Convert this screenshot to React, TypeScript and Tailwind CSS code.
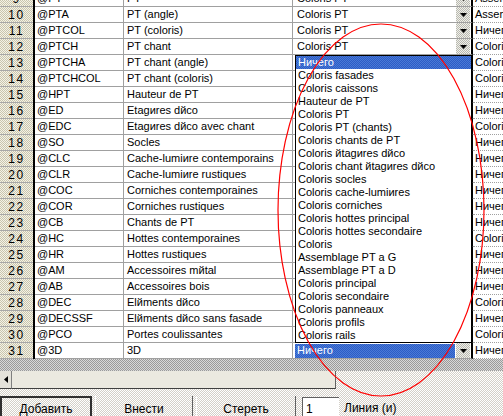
import React from 'react';

type Row = [number, string, string, string, string];

const rows: Row[] = [
  [9, '@PT', 'PT', 'Coloris PT', 'Assemblage PT a G'],
  [10, '@PTA', 'PT (angle)', 'Coloris PT', 'Assemblage PT a D'],
  [11, '@PTCOL', 'PT (coloris)', 'Coloris PT', 'Ничего'],
  [12, '@PTCH', 'PT chant', 'Coloris PT', 'Coloris PT'],
  [13, '@PTCHA', 'PT chant (angle)', '', 'Coloris PT (chants)'],
  [14, '@PTCHCOL', 'PT chant (coloris)', '', 'Coloris chants de PT'],
  [15, '@HPT', 'Hauteur de PT', '', 'Ничего'],
  [16, '@ED', 'Etagиres dйco', '', 'Ничего'],
  [17, '@EDC', 'Etagиres dйco avec chant', '', 'Coloris'],
  [18, '@SO', 'Socles', '', 'Ничего'],
  [19, '@CLC', 'Cache-lumiиre contemporains', '', 'Ничего'],
  [20, '@CLR', 'Cache-lumiиre rustiques', '', 'Ничего'],
  [21, '@COC', 'Corniches contemporaines', '', 'Ничего'],
  [22, '@COR', 'Corniches rustiques', '', 'Ничего'],
  [23, '@CB', 'Chants de PT', '', 'Ничего'],
  [24, '@HC', 'Hottes contemporaines', '', 'Coloris'],
  [25, '@HR', 'Hottes rustiques', '', 'Ничего'],
  [26, '@AM', 'Accessoires mйtal', '', 'Ничего'],
  [27, '@AB', 'Accessoires bois', '', 'Ничего'],
  [28, '@DEC', 'Elйments dйco', '', 'Coloris'],
  [29, '@DECSSF', 'Elйments dйco sans fasade', '', 'Ничего'],
  [30, '@PCO', 'Portes coulissantes', '', 'Coloris'],
  [31, '@3D', '3D', '', 'Ничего'],
];

const options = [
  'Ничего',
  'Coloris fasades',
  'Coloris caissons',
  'Hauteur de PT',
  'Coloris PT',
  'Coloris PT (chants)',
  'Coloris chants de PT',
  'Coloris йtagиres dйco',
  'Coloris chant йtagиres dйco',
  'Coloris socles',
  'Coloris cache-lumiиres',
  'Coloris corniches',
  'Coloris hottes principal',
  'Coloris hottes secondaire',
  'Coloris',
  'Assemblage PT a G',
  'Assemblage PT a D',
  'Coloris principal',
  'Coloris secondaire',
  'Coloris panneaux',
  'Coloris profils',
  'Coloris rails',
];

const ArrowBtn: React.FC = () => (
  <div className="w-[14px] h-[15px] mr-[1px] shrink-0 flex items-center justify-center bg-[image:repeating-conic-gradient(#b8b8b0_0%_25%,#f0f0ea_0%_50%)] bg-[length:2px_2px]">
    <svg width="7" height="4" viewBox="0 0 7 4">
      <polygon points="0,0 7,0 3.5,4" fill="#000" />
    </svg>
  </div>
);

const App: React.FC = () => {
  return (
    <div className="relative w-[503px] h-[416px] overflow-hidden bg-[image:repeating-conic-gradient(#d4d0c8_0%_25%,#ffffff_0%_50%)] bg-[length:2px_2px] font-['Liberation_Sans',Arial,sans-serif] text-[11px] text-black leading-none">
      {/* grid */}
      <div className="h-[359px] overflow-hidden">
        <div className="-mt-[9px]">
          {rows.map(([n, code, name, combo, right]) => (
            <div key={n} className="flex h-4">
              <div className="w-[35px] shrink-0 border-r-2 border-black">
                <div className="h-4 flex items-center justify-center border-b border-[#a8a8a8] bg-[image:repeating-conic-gradient(#c9c5ae_0%_25%,#f4f2e6_0%_50%)] bg-[length:2px_2px] text-[12px] tracking-[1.5px]">
                  {n}
                </div>
              </div>
              <div className="w-[89px] shrink-0 bg-white border-r border-b border-[#a0a0a0] border-b-dotted pl-[2px] flex items-center whitespace-nowrap overflow-hidden">
                {code}
              </div>
              <div className="w-[169px] shrink-0 bg-white border-r border-b border-[#a0a0a0] border-b-dotted pl-[3px] flex items-center whitespace-nowrap overflow-hidden">
                {name}
              </div>
              <div className="w-[180px] shrink-0 bg-white border-r-2 border-r-black border-b border-b-[#a0a0a0] border-b-dotted pl-[4px] flex items-center whitespace-nowrap overflow-hidden">
                {n === 31 ? (
                  <>
                    <div className="flex-1 h-[14px] -ml-[2px] pl-[2px] mr-[1px] flex items-center text-white bg-[image:repeating-conic-gradient(#2c5cc6_0%_25%,#4a7ad6_0%_50%)] bg-[length:2px_2px]">
                      Ничего
                    </div>
                    <ArrowBtn />
                  </>
                ) : n <= 12 ? (
                  <>
                    <span className="flex-1">{combo}</span>
                    <ArrowBtn />
                  </>
                ) : (
                  <span className="flex-1">{combo}</span>
                )}
              </div>
              <div className="flex-1 bg-white border-b border-[#a0a0a0] border-dotted pl-[2px] flex items-center whitespace-nowrap overflow-hidden">
                {right}
              </div>
            </div>
          ))}
        </div>
      </div>

      {/* grey band */}
      <div className="h-[12px] bg-[image:repeating-conic-gradient(#9a9a9a_0%_25%,#d8d8d8_0%_50%)] bg-[length:2px_2px]" />

      {/* horizontal scrollbar */}
      <div className="flex h-[18px]">
        <div className="w-[12px] flex items-center justify-center border-r border-[#808080] border-b border-b-[#404040] bg-[#e4e2da]">
          <svg width="4" height="7" viewBox="0 0 4 7">
            <polygon points="4,0 4,7 0,3.5" fill="#000" />
          </svg>
        </div>
        <div className="w-[324px] bg-[#ebe9e0] border-r border-[#606060] border-b border-b-[#404040]" />
        <div className="flex-1" />
      </div>

      {/* buttons */}
      <div className="flex items-start pt-[7px] text-[12px]">
        <div className="w-[92px] h-[26px] border-2 border-[#303030] flex items-center justify-center">Добавить</div>
        <div className="w-[98px] h-[26px] ml-[3px] border-l border-white border-r border-r-[#606060] flex items-center justify-center">Внести</div>
        <div className="w-[100px] h-[26px] ml-[3px] border-l border-white border-r border-r-[#606060] flex items-center justify-center">Стереть</div>
        <div className="w-[37px] h-[22px] ml-[6px] mt-[1px] bg-white border-t border-l border-[#606060] pl-[3px] flex items-center">1</div>
        <div className="ml-[5px] h-[24px] flex items-center">Линия (и)</div>
      </div>

      {/* opened dropdown list */}
      <div className="absolute left-[295px] top-[55px] w-[177px] bg-white border border-black">
        {options.map((o, i) => (
          <div
            key={o}
            className={
              i === 0
                ? 'h-[13px] pl-[2px] flex items-center whitespace-nowrap text-white bg-[image:repeating-conic-gradient(#2c5cc6_0%_25%,#4a7ad6_0%_50%)] bg-[length:2px_2px]'
                : 'h-[13px] pl-[2px] flex items-center whitespace-nowrap'
            }
          >
            {o}
          </div>
        ))}
      </div>

      {/* red hand-drawn ellipse */}
      <svg className="absolute left-0 top-0 pointer-events-none" width="503" height="416" viewBox="0 0 503 416">
        <ellipse cx="381" cy="210" rx="103" ry="186" fill="none" stroke="#ff0000" strokeWidth="1.2" />
      </svg>
    </div>
  );
};

export default App;
